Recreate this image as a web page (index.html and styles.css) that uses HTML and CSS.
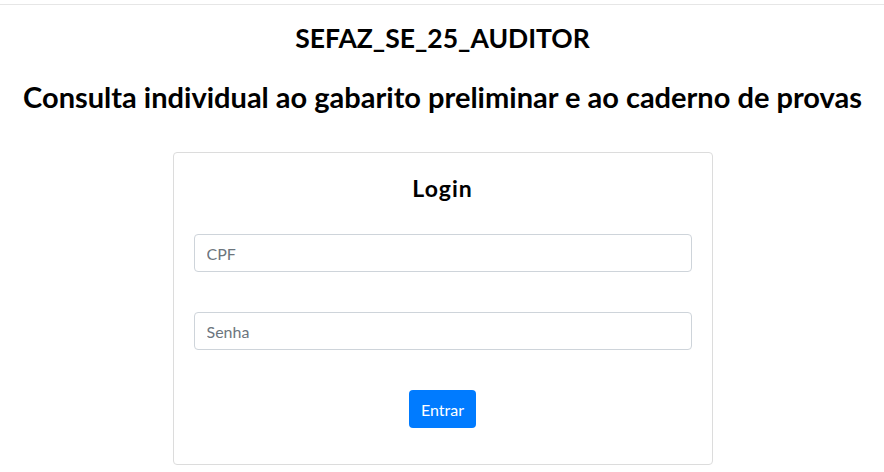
FILE: index.html
```html
<!DOCTYPE html>
<html lang="pt-BR">
<head>
<meta charset="utf-8">
<title>Login</title>
<link rel="stylesheet" href="styles.css">
</head>
<body>
<div class="topbar"></div>
<main class="page">
  <h2 class="title">SEFAZ_SE_25_AUDITOR</h2>
  <h3 class="subtitle">Consulta individual ao gabarito preliminar e ao caderno de provas</h3>
  <div class="card">
    <h4 class="card-title">Login</h4>
    <form class="form">
      <input class="field" type="text" placeholder="CPF">
      <input class="field" type="password" placeholder="Senha">
      <div class="actions"><button class="btn" type="button">Entrar</button></div>
    </form>
  </div>
</main>
</body>
</html>
```
FILE: styles.css
```css
* { box-sizing: border-box; }
body {
  margin: 0;
  font-family: Lato, "Noto Sans", sans-serif;
  color: #000;
  background: #fff;
}
.topbar {
  height: 5px;
  border-bottom: 1px solid #e6e6e6;
}
.page {
  display: flex;
  flex-direction: column;
  align-items: center;
  padding-left: 1px;
}
.title {
  margin: 18px 0 0;
  font-size: 26.5px;
  font-weight: 700;
  line-height: 1.2;
}
.subtitle {
  margin: 25px 0 0;
  font-size: 29px;
  font-weight: 700;
  line-height: 1.2;
}
.card {
  margin-top: 37px;
  width: 540px;
  border: 1px solid #dcdcdc;
  border-radius: 4px;
  padding: 22px 20px 36px;
  display: flex;
  flex-direction: column;
}
.card-title {
  margin: 0 0 32px;
  text-align: center;
  font-size: 23px;
  letter-spacing: 1px;
  font-weight: 700;
  line-height: 1.2;
}
.form {
  display: flex;
  flex-direction: column;
  gap: 40px;
}
.field {
  height: 38px;
  width: 100%;
  border: 1px solid #ced4da;
  border-radius: 4px;
  padding: 6px 12px;
  font-family: inherit;
  font-size: 16px;
  color: #495057;
}
.field::placeholder { color: #6c757d; }
.actions { display: flex; justify-content: center; }
.btn {
  height: 38px;
  padding: 6px 12px;
  border: none;
  border-radius: 4px;
  background: #007bff;
  color: #fff;
  font-family: inherit;
  font-size: 16px;
}
```
